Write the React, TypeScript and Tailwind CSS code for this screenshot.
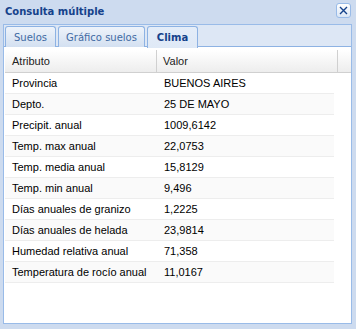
import React from 'react';

const rows: [string, string][] = [
    ['Provincia', 'BUENOS AIRES'],
    ['Depto.', '25 DE MAYO'],
    ['Precipit. anual', '1009,6142'],
    ['Temp. max anual', '22,0753'],
    ['Temp. media anual', '15,8129'],
    ['Temp. min anual', '9,496'],
    ['Días anuales de granizo', '1,2225'],
    ['Días anuales de helada', '23,9814'],
    ['Humedad relativa anual', '71,358'],
    ['Temperatura de rocío anual', '11,0167'],
];

const tahoma = "font-['DejaVu_Sans',Tahoma,sans-serif]";
const arial = "font-['Liberation_Sans',Arial,sans-serif]";

const App: React.FC = () => {
    return (
        <div className="w-[356px] h-[329px] bg-[#cddbef] flex flex-col pl-[3px] pr-[4px] pb-[5px] overflow-hidden">
            {/* title bar */}
            <div className="h-[24px] flex items-center justify-between pl-[2px] pr-[1px]">
                <span className={`${tahoma} text-[10px] font-bold text-[#15428b] leading-none`}>Consulta múltiple</span>
                <button className="w-[15px] h-[15px] rounded-[3px] border border-[#99bbe8] bg-gradient-to-b from-white to-[#dbe6f5] flex items-center justify-center -mt-[3px]">
                    <svg width="9" height="9" viewBox="0 0 9 9">
                        <path d="M1 1L8 8M8 1L1 8" stroke="#15428b" strokeWidth="1.4" />
                    </svg>
                </button>
            </div>

            {/* tab strip */}
            <div className="h-[23px] bg-[#dde7f5] border border-b-0 border-[#99bbe8] relative flex items-end gap-[2px] pl-[1px]">
                <div className="absolute left-0 right-0 bottom-0 h-px bg-[#8db2e3]" />
                <div className={`${tahoma} relative h-[21px] w-[51px] rounded-t-[3px] border border-b-0 border-[#8db2e3] bg-gradient-to-b from-[#eef3fa] to-[#d3e0f1] flex items-center justify-center text-[10px] text-[#416aa3]`}>
                    Suelos
                </div>
                <div className={`${tahoma} relative h-[21px] w-[87px] rounded-t-[3px] border border-b-0 border-[#8db2e3] bg-gradient-to-b from-[#eef3fa] to-[#d3e0f1] flex items-center justify-center text-[10px] text-[#416aa3]`}>
                    Gráfico suelos
                </div>
                <div className={`${tahoma} relative h-[22px] -mb-px w-[51px] rounded-t-[3px] border border-b-0 border-[#8db2e3] bg-gradient-to-b from-[#e4edf9] to-[#dfe9f6] flex items-center justify-center text-[10px] font-bold text-[#15428b] pb-px`}>
                    Clima
                </div>
            </div>

            {/* body */}
            <div className="flex-1 bg-white border border-t-0 border-[#99bbe8] pl-px pt-[3px]">
                <div className={`${arial} text-[11px] text-black`}>
                    <div className="h-[23px] flex bg-gradient-to-b from-white to-[#ededed] border-b border-[#d0d0d0] text-[#222]">
                        <div className="w-[152px] pl-[7px] flex items-center border-r border-[#d0d0d0]">Atributo</div>
                        <div className="w-[181px] pl-[6px] flex items-center border-r border-[#d0d0d0]">Valor</div>
                        <div className="flex-1" />
                    </div>
                    {rows.map(([k, v], i) => (
                        <div
                            key={k}
                            className={`w-[329px] h-[21px] flex items-center border-b border-[#ededed] ${i % 2 === 1 ? 'bg-[#fafafa]' : 'bg-white'}`}
                        >
                            <div className="w-[152px] pl-[7px]">{k}</div>
                            <div className="pl-[7px]">{v}</div>
                        </div>
                    ))}
                </div>
            </div>
        </div>
    );
};

export default App;
